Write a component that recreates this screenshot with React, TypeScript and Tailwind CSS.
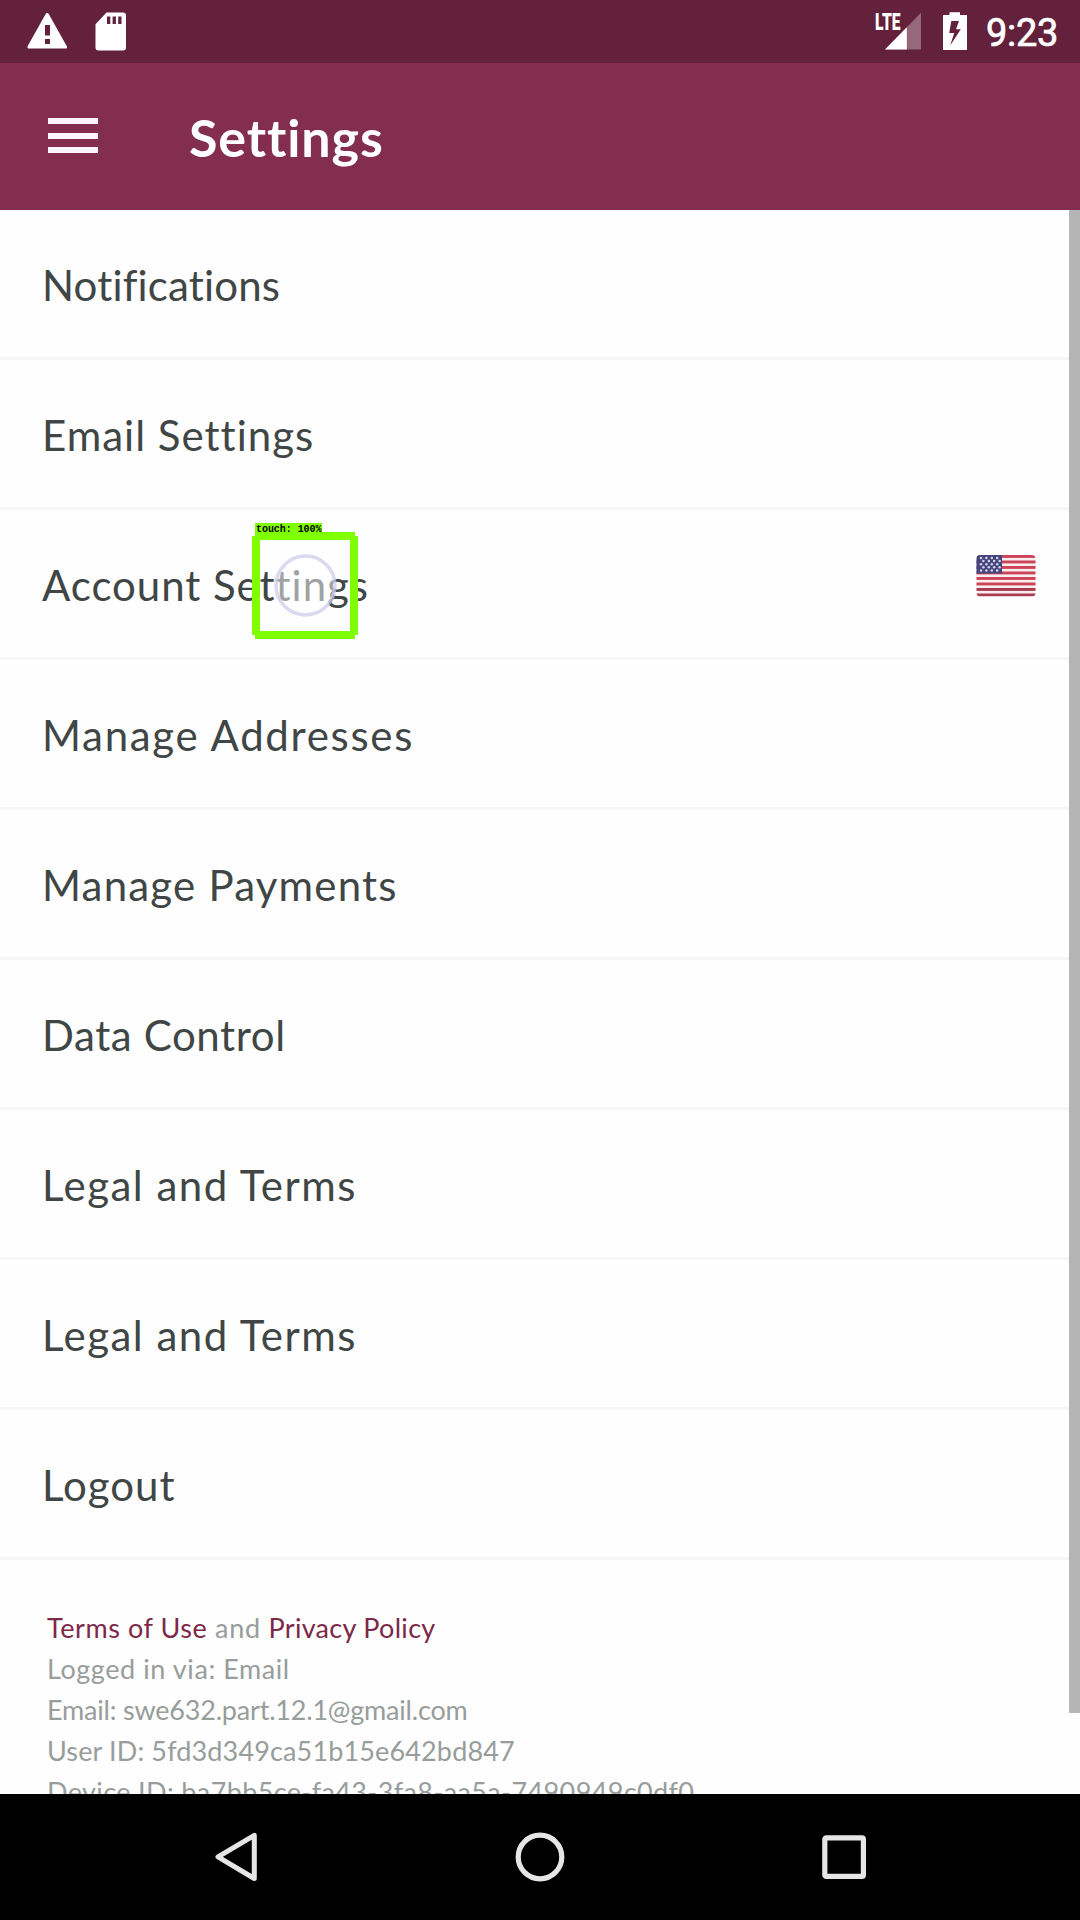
import React from "react";

type Row = { label: string; spacing: string; flag?: boolean; touched?: boolean };

const rows: Row[] = [
  { label: "Notifications", spacing: "tracking-[0.16px]" },
  { label: "Email Settings", spacing: "tracking-[1px]" },
  { label: "Account Settings", spacing: "tracking-[0.95px]", flag: true, touched: true },
  { label: "Manage Addresses", spacing: "tracking-[1.7px]" },
  { label: "Manage Payments", spacing: "tracking-[1.2px]" },
  { label: "Data Control", spacing: "tracking-[0.6px]" },
  { label: "Legal and Terms", spacing: "tracking-[1.48px]" },
  { label: "Legal and Terms", spacing: "tracking-[1.48px]" },
  { label: "Logout", spacing: "tracking-[1px]" },
];

const details = [
  { text: "Logged in via: Email", spacing: "tracking-[0.58px]" },
  { text: "Email: swe632.part.12.1@gmail.com", spacing: "tracking-[-0.2px]" },
  { text: "User ID: 5fd3d349ca51b15e642bd847", spacing: "tracking-[0.14px]" },
  { text: "Device ID: ba7bb5ce-fa43-3fa8-aa5a-7490949c0df0", spacing: "tracking-[0.37px]" },
];

function StatusBar() {
  return (
    <div className="flex h-[63px] shrink-0 items-start bg-[#64213b] text-white">
      <svg className="mt-[12px] ml-[27px] h-[38px] w-[41px]" viewBox="0 0 41 38" fill="currentColor">
        <path
          fillRule="evenodd"
          d="M18.8 1.8Q20.2 0 21.6 1.8L39.8 34.2Q40.6 36.5 38.5 36.5H2Q0 36.5 .6 34.2ZM18 13V23.5H23V13ZM18 27V32H23V27Z"
        />
      </svg>
      <svg className="mt-[12px] ml-[27px] h-[39px] w-[31px]" viewBox="0 0 31 39" fill="currentColor">
        <path
          fillRule="evenodd"
          d="M11.5.6H28Q31 .6 31 3.6V35.4Q31 38.4 28 38.4H3.5Q.5 38.4 .5 35.4V12.2ZM12 4.5V12H15.3V4.5ZM17.6 4.5V12H20.9V4.5ZM23.2 4.5V12H26.5V4.5Z"
        />
      </svg>
      <div className="relative mt-[12px] ml-[749px] h-[38px] w-[47px]">
        <svg className="h-[38px] w-[47px]" viewBox="0 0 47 38">
          <path d="M10 37.5 46 .8V37.5Z" fill="#96687b" />
          <path d="M10 37.5 31.8 15.3V37.5Z" fill="#fff" />
        </svg>
        <span className="absolute top-[1px] left-0 origin-left scale-x-[0.68] font-['Roboto'] text-[23px] leading-[19px] font-black">
          LTE
        </span>
      </div>
      <svg className="mt-[12px] ml-[20px] h-[38px] w-[26px]" viewBox="0 0 26 38" fill="currentColor">
        <path
          fillRule="evenodd"
          d="M7.5 .3H18V3H25V38H1V3H7.5ZM9.3 9 7.2 21H12.2L8.2 33.5 18.8 17.3H14L17 9Z"
        />
      </svg>
      <span className="ml-[18px] font-['Roboto'] text-[38px] leading-[67px] font-normal tracking-[-0.3px] [-webkit-text-stroke:0.7px_white]">
        9:23
      </span>
    </div>
  );
}

function AppBar() {
  return (
    <header className="flex h-[147px] shrink-0 items-center bg-[#832e4f] text-white">
      <button className="ml-[48px] flex w-[50px] flex-col gap-[8.5px] pb-[2px]" aria-label="Menu">
        <span className="h-[6px] w-full bg-[#fff5fb]" />
        <span className="h-[6px] w-full bg-[#fff5fb]" />
        <span className="h-[6px] w-full bg-[#fff5fb]" />
      </button>
      <h1 className="ml-[91px] text-[52px] leading-[60px] font-bold tracking-[0.9px]">Settings</h1>
    </header>
  );
}

function Flag() {
  const stripes = [0, 1, 2, 3, 4, 5, 6, 7];
  return (
    <svg className="mr-[44px] h-[43px] w-[60px] -translate-y-[8px]" viewBox="0 0 60 43">
      <defs>
        <clipPath id="flag">
          <rect x="0.5" y="1" width="59" height="41.5" rx="4" />
        </clipPath>
      </defs>
      <g clipPath="url(#flag)">
        <rect width="60" height="43" fill="#f8eef0" />
        {stripes.map((i) => (
          <rect key={i} y={1 + i * 5.5} width="60" height="2.9" fill={i > 5 ? "#a93a50" : "#cc4358"} />
        ))}
        <rect width="26" height="19.5" fill="#46447d" />
        {[0, 1, 2, 3, 4].map((r) =>
          [0, 1, 2, 3].map((c) => (
            <circle key={`${r}-${c}`} cx={5 + c * 5.4 + (r % 2) * 2.4} cy={4 + r * 3.1} r="1.25" fill="#d5d4ea" />
          ))
        )}
      </g>
    </svg>
  );
}

function TouchMarker() {
  return (
    <div className="absolute top-[11px] left-[210px] h-[118px] w-[110px]">
      <svg className="absolute top-0 left-0 h-[118px] w-[110px]" viewBox="0 0 110 118">
        <circle cx="53.5" cy="64.5" r="29.5" fill="#fff" fillOpacity=".5" stroke="#c9c9ea" strokeOpacity=".7" strokeWidth="3.5" />
        <g fill="#80ff00">
          <rect x="3" y="2" width="67" height="11" />
          <rect x="3" y="11" width="100" height="8" />
          <rect x="3" y="110" width="100" height="8" />
          <rect x="0" y="15" width="8" height="99" />
          <rect x="98" y="15" width="8" height="99" />
        </g>
      </svg>
      <span className="absolute top-[3px] left-[4px] font-['Liberation_Mono'] text-[10px] leading-[12px] font-bold tracking-[-0.05px] whitespace-nowrap text-black">
        touch: 100%
      </span>
    </div>
  );
}

function SettingsRow({ label, spacing, flag, touched }: Row) {
  return (
    <li className="flex h-[150px] items-center justify-between border-b-[3px] border-[#f6f7f7] pl-[42px]">
      <span className={`relative pt-[4px] text-[42px] leading-[143px] text-[#404645] ${spacing}`}>
        {label}
        {touched && <TouchMarker />}
      </span>
      {flag && <Flag />}
    </li>
  );
}

function NavigationBar() {
  return (
    <nav className="flex h-[126px] shrink-0 items-center justify-between bg-black pr-[213px] pl-[214px]">
      <svg className="h-[50px] w-[44px]" viewBox="0 0 44 50" fill="none" stroke="#e6e6e6" strokeWidth="5" strokeLinejoin="round">
        <path d="M40.3 3.3V46.5L4 24.9Z" />
      </svg>
      <svg className="h-[50px] w-[50px]" viewBox="0 0 50 50" fill="none" stroke="#e6e6e6" strokeWidth="5.2">
        <circle cx="25" cy="25" r="21.8" />
      </svg>
      <svg className="h-[46px] w-[46px]" viewBox="0 0 46 46" fill="none" stroke="#e6e6e6" strokeWidth="5.2">
        <rect x="3.8" y="3.8" width="38.6" height="38.6" rx="1.5" />
      </svg>
    </nav>
  );
}

export default function App() {
  return (
    <div className="flex h-[1920px] w-[1080px] flex-col overflow-hidden bg-[#fefefe] font-['Lato',sans-serif]">
      <StatusBar />
      <AppBar />
      <main className="relative h-[1584px] shrink-0 overflow-hidden">
        <ul>
          {rows.map((row, i) => (
            <SettingsRow key={i} {...row} />
          ))}
        </ul>
        <footer className="pt-[47px] pl-[47px] text-[27px] leading-[41px] text-[#979d9b]">
          <p>
            <a className="tracking-[0.56px] text-[#7d2849]">Terms of Use</a>
            <span className="tracking-[0.75px]"> and </span>
            <a className="tracking-[0.3px] text-[#7d2849]">Privacy Policy</a>
          </p>
          {details.map((d) => (
            <p key={d.text} className={d.spacing}>
              {d.text}
            </p>
          ))}
        </footer>
        <div className="absolute top-0 right-0 h-[1503px] w-[11px] bg-[#b5b5b5]" />
      </main>
      <NavigationBar />
    </div>
  );
}
